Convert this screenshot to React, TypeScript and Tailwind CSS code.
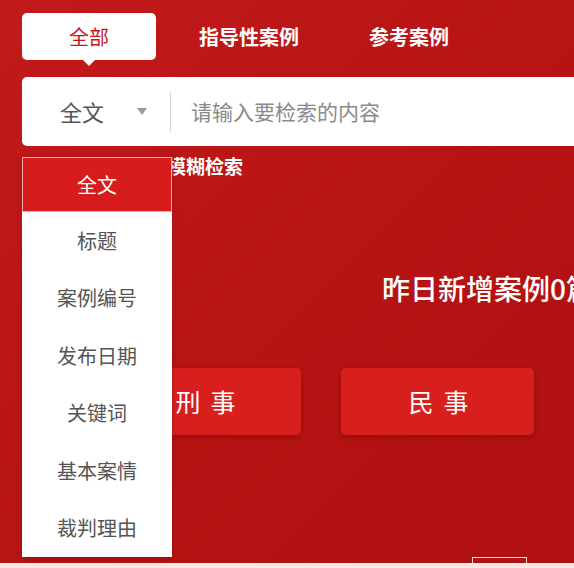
import { useState } from 'react';

const TABS = ['全部', '指导性案例', '参考案例'];
const FIELDS = ['全文', '标题', '案例编号', '发布日期', '关键词', '基本案情', '裁判理由'];

export default function App() {
  const [tab] = useState(0);
  const [field] = useState(0);

  return (
    <div className="relative flex h-[568px] w-[574px] flex-col overflow-hidden bg-gradient-to-br from-[#c21a1a] via-[#b71414] to-[#b01010] font-['Noto_Sans_CJK_SC','Noto_Sans',sans-serif]">
      <div className="pl-[22px] pt-[13px]">
        {/* tabs */}
        <div className="flex gap-[26px]">
          {TABS.map((t, i) =>
            i === tab ? (
              <div
                key={t}
                className="relative flex h-[47px] w-[134px] shrink-0 items-center justify-center rounded-[5px] bg-white text-[20px] text-[#c8161d]"
              >
                {t}
                <span className="absolute left-[60px] top-[46px] h-0 w-0 border-x-[7px] border-t-[7px] border-x-transparent border-t-white" />
              </div>
            ) : (
              <div
                key={t}
                className="flex h-[47px] w-[134px] shrink-0 items-center justify-center text-[20px] font-bold text-white"
              >
                {t}
              </div>
            )
          )}
        </div>

        {/* search bar */}
        <div className="mt-[17px] flex h-[69px] w-[620px] items-center rounded-l-[5px] bg-white">
          <span className="ml-[38px] text-[22px] text-[#555]">{FIELDS[field]}</span>
          <span className="ml-[33px] h-0 w-0 border-x-[5px] border-t-[7px] border-x-transparent border-t-[#9a9a9a]" />
          <span className="ml-[23px] h-[40px] w-px bg-[#d4d4d4]" />
          <span className="ml-[20px] text-[21px] text-[#8a8a8a]">请输入要检索的内容</span>
        </div>

        {/* search options */}
        <div className="mt-[8px] flex h-[24px] items-center text-[19px] font-bold text-white">
          <span className="ml-[30px]">精确检索</span>
          <span className="ml-[39px]">模糊检索</span>
        </div>

        <div className="mt-[92px] pl-[360px] text-[28px] font-medium leading-[36px] whitespace-nowrap text-white">
          昨日新增案例0篇
        </div>

        <div className="ml-[86px] mt-[62px] flex gap-[40px]">
          {['刑事', '民事'].map((c) => (
            <div
              key={c}
              className="flex h-[67px] w-[193px] shrink-0 items-center justify-center rounded-[5px] bg-[#d91e1e] pl-[12px] text-[25px] tracking-[10px] text-white shadow-[0_2px_6px_rgba(90,0,0,0.35)]"
            >
              {c}
            </div>
          ))}
        </div>
      </div>

      <div className="mt-auto h-[5px] w-full bg-[#f9e7e7]" />
      <div className="absolute bottom-[5px] left-[472px] h-[6px] w-[55px] border-x border-t border-[#f4dada]" />

      {/* field dropdown */}
      <div className="absolute left-[22px] top-[157px] w-[150px] bg-white shadow-[0_2px_6px_rgba(0,0,0,0.15)]">
        {FIELDS.map((f, i) =>
          i === field ? (
            <div
              key={f}
              className="flex h-[55px] items-center justify-center border border-[#f2a9a9] bg-[#d61c1c] text-[20px] text-white"
            >
              {f}
            </div>
          ) : (
            <div key={f} className="flex h-[57.5px] items-center justify-center text-[20px] text-[#555]">
              {f}
            </div>
          )
        )}
      </div>
    </div>
  );
}
